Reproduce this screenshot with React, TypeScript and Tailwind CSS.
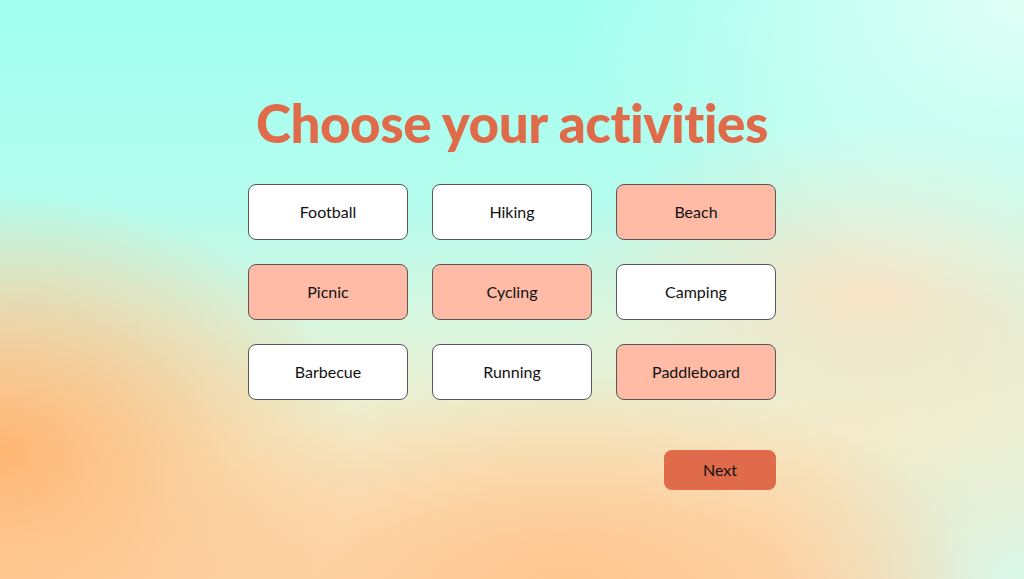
import { useState } from "react";

const activities = [
  "Football",
  "Hiking",
  "Beach",
  "Picnic",
  "Cycling",
  "Camping",
  "Barbecue",
  "Running",
  "Paddleboard",
];

export default function App() {
  const [selected, setSelected] = useState<Set<string>>(
    new Set(["Beach", "Picnic", "Cycling", "Paddleboard"])
  );

  const toggle = (name: string) => {
    setSelected((prev) => {
      const next = new Set(Array.from(prev));
      if (next.has(name)) next.delete(name);
      else next.add(name);
      return next;
    });
  };

  return (
    <div className="w-full h-[579px] overflow-hidden font-['Lato',sans-serif] bg-[radial-gradient(ellipse_45%_55%_at_100%_0%,#e2fff5_0%,transparent_100%),radial-gradient(ellipse_35%_45%_at_0%_78%,#ffb674_0%,transparent_100%),radial-gradient(ellipse_40%_35%_at_55%_100%,#ffc690_0%,transparent_100%),radial-gradient(ellipse_30%_30%_at_85%_50%,#f9e4c6_0%,transparent_100%),radial-gradient(ellipse_25%_35%_at_100%_100%,#d8f8ea_0%,transparent_100%),linear-gradient(180deg,#a0fff0_0%,#b4fdee_35%,#d8f6e0_55%,#f3ecca_75%,#fdd9b0_100%)]">
      <div className="flex flex-col items-center pt-[96px]">
        <h1 className="text-[53px] leading-none font-black text-[#e06b4a] tracking-[-0.5px]">
          Choose your activities
        </h1>

        <div className="mt-[35px] grid grid-cols-3 gap-6">
          {activities.map((name) => {
            const on = selected.has(name);
            return (
              <button
                key={name}
                onClick={() => toggle(name)}
                className={`w-[160px] h-[56px] rounded-lg border border-[#555] text-[16px] text-[#111] ${
                  on ? "bg-[#ffbba5]" : "bg-white"
                }`}
              >
                {name}
              </button>
            );
          })}
        </div>

        <div className="w-[528px] flex justify-end mt-[50px]">
          <button className="w-[112px] h-[40px] rounded-lg bg-[#e06b4a] text-[16px] text-[#111]">
            Next
          </button>
        </div>
      </div>
    </div>
  );
}
